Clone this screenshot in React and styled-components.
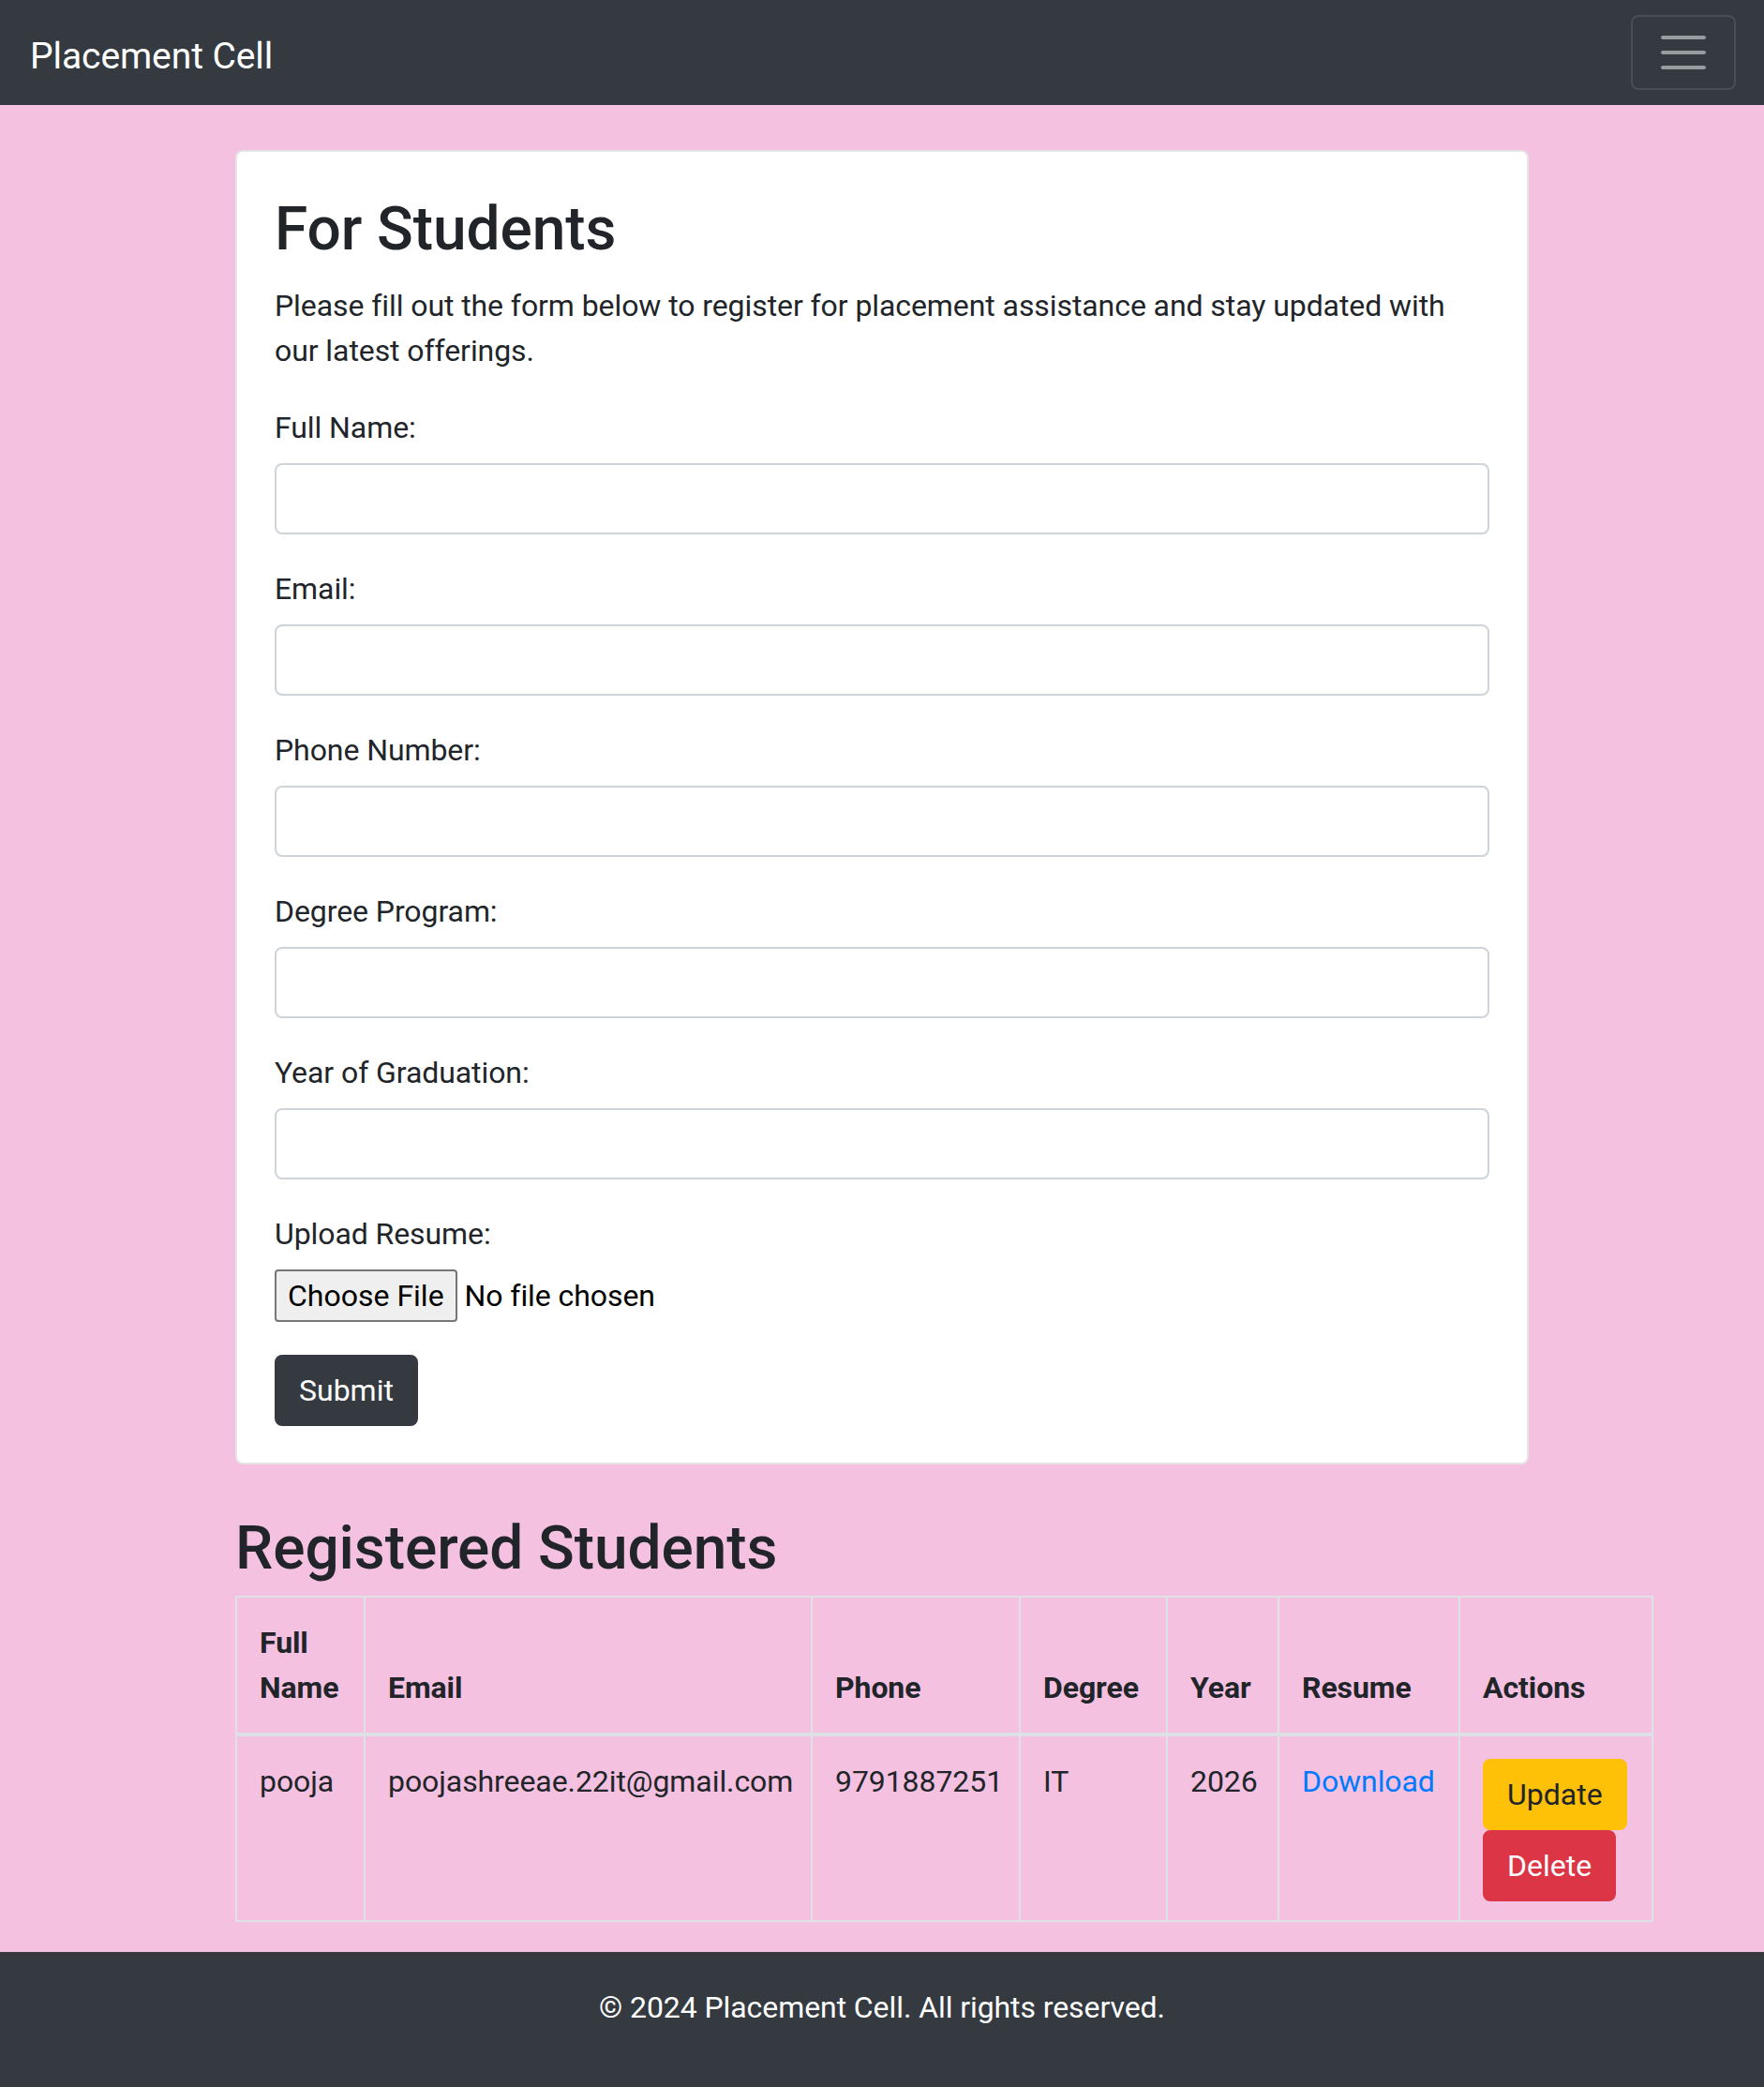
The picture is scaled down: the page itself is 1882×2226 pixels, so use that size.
import React from "react";
import styled, { createGlobalStyle } from "styled-components";

const GlobalStyle = createGlobalStyle`
  *, *::before, *::after { box-sizing: border-box; }
  body {
    margin: 0;
    background: #f5c1e1;
    font-family: Roboto, "Liberation Sans", Arial, sans-serif;
    font-size: 32px;
    line-height: 1.5;
    letter-spacing: -0.08px;
    color: #212529;
  }
`;

const Navbar = styled.nav`
  display: flex;
  align-items: center;
  justify-content: space-between;
  height: 112px;
  padding: 16px 30px 16px 32px;
  background: #343a40;
`;

const Brand = styled.a`
  color: #fff;
  font-size: 39px;
  line-height: 1.5;
  padding: 14px 0 6px;
  text-decoration: none;
  white-space: nowrap;
`;

const Toggler = styled.button`
  display: flex;
  align-items: center;
  justify-content: center;
  width: 112px;
  height: 80px;
  padding: 8px 24px;
  background: transparent;
  border: 2px solid rgba(255, 255, 255, 0.1);
  border-radius: 8px;
  cursor: pointer;
`;

const Main = styled.main`
  width: 1380px;
  margin: 48px auto 0;
`;

const Card = styled.section`
  background: #fff;
  border: 2px solid rgba(0, 0, 0, 0.1);
  border-radius: 8px;
  padding: 45px 40px 39px;
`;

const Heading = styled.h1`
  font-size: 64px;
  font-weight: 500;
  line-height: 1.2;
  margin: ${(p) => p.$top || 0}px 0 ${(p) => p.$bottom || 0}px;
`;

const Intro = styled.p`
  margin: 0 0 32px;
  padding-top: 2px;
`;

const Field = styled.div`
  margin-bottom: ${(p) => p.$gap || 32}px;
`;

const Label = styled.label`
  display: block;
  padding-top: 2px;
  margin-bottom: 14px;
`;

const TextInput = styled.input`
  display: block;
  width: 100%;
  height: 76px;
  padding: 12px 24px;
  font: inherit;
  color: #495057;
  background: #fff;
  border: 2px solid #ced4da;
  border-radius: 8px;
`;

const FileRow = styled.div`
  display: flex;
  align-items: center;
  gap: 8px;
`;

const FileButton = styled.button`
  height: 56px;
  padding: 2px 12px;
  font: inherit;
  line-height: 48px;
  color: #000;
  background: #efefef;
  border: 2px solid #767676;
  border-radius: 4px;
`;

const FileStatus = styled.span`
  color: #000;
`;

const Button = styled.button`
  display: inline-block;
  padding: 12px 24px;
  font: inherit;
  line-height: 48px;
  border-radius: 8px;
  cursor: pointer;
  color: ${(p) => (p.$variant === "warning" ? "#212529" : "#fff")};
  background: ${(p) =>
    p.$variant === "warning" ? "#ffc107" : p.$variant === "danger" ? "#dc3545" : "#343a40"};
  border: 2px solid
    ${(p) =>
      p.$variant === "warning" ? "#ffc107" : p.$variant === "danger" ? "#dc3545" : "#343a40"};
`;

const Table = styled.table`
  width: 1511px;
  table-layout: fixed;
  border-collapse: collapse;
  margin-bottom: 32px;
`;

const Col = styled.col`
  width: ${(p) => p.$w}px;
`;

const Th = styled.th`
  padding: 24px;
  text-align: left;
  vertical-align: bottom;
  font-weight: 700;
  border: 2px solid #dee2e6;
  border-bottom-width: 4px;
`;

const Td = styled.td`
  padding: 24px 24px 20px;
  vertical-align: top;
  border: 2px solid #dee2e6;
  white-space: nowrap;
`;

const Link = styled.a`
  color: #007bff;
  text-decoration: none;
`;

const ActionStack = styled.div`
  display: flex;
  flex-direction: column;
  align-items: flex-start;
`;

const Footer = styled.footer`
  background: #343a40;
  color: #fff;
  text-align: center;
  padding: 35px 0 29px;
`;

const FooterText = styled.p`
  margin: 0 0 32px;
`;

const fields = [
  { id: "name", label: "Full Name:", type: "text" },
  { id: "email", label: "Email:", type: "email" },
  { id: "phone", label: "Phone Number:", type: "tel" },
  { id: "degree", label: "Degree Program:", type: "text" },
  { id: "year", label: "Year of Graduation:", type: "text" },
];

const columns = [
  { title: "Full Name", w: 137 },
  { title: "Email", w: 477 },
  { title: "Phone", w: 222 },
  { title: "Degree", w: 157 },
  { title: "Year", w: 119 },
  { title: "Resume", w: 193 },
  { title: "Actions", w: 206 },
];

export default function App() {
  return (
    <>
      <GlobalStyle />
      <Navbar>
        <Brand href="#">Placement Cell</Brand>
        <Toggler aria-label="Toggle navigation">
          <svg width="60" height="60" viewBox="0 0 30 30">
            <path
              d="M4 7h22M4 15h22M4 23h22"
              stroke="rgba(255,255,255,0.5)"
              strokeWidth="2"
              strokeLinecap="round"
            />
          </svg>
        </Toggler>
      </Navbar>
      <Main>
        <Card>
          <Heading $bottom={16}>For Students</Heading>
          <Intro>
            Please fill out the form below to register for placement assistance and stay updated with
            our latest offerings.
          </Intro>
          <form onSubmit={(e) => e.preventDefault()}>
            {fields.map((f) => (
              <Field key={f.id}>
                <Label htmlFor={f.id}>{f.label}</Label>
                <TextInput id={f.id} type={f.type} />
              </Field>
            ))}
            <Field $gap={35}>
              <Label>Upload Resume:</Label>
              <FileRow>
                <FileButton type="button">Choose File</FileButton>
                <FileStatus>No file chosen</FileStatus>
              </FileRow>
            </Field>
            <Button type="submit">Submit</Button>
          </form>
        </Card>
        <Heading as="h2" $top={52} $bottom={11}>
          Registered Students
        </Heading>
        <Table>
          <colgroup>
            {columns.map((c) => (
              <Col key={c.title} $w={c.w} />
            ))}
          </colgroup>
          <thead>
            <tr>
              {columns.map((c) => (
                <Th key={c.title}>{c.title}</Th>
              ))}
            </tr>
          </thead>
          <tbody>
            <tr>
              <Td>pooja</Td>
              <Td>poojashreeae.22it@gmail.com</Td>
              <Td>9791887251</Td>
              <Td>IT</Td>
              <Td>2026</Td>
              <Td>
                <Link href="#">Download</Link>
              </Td>
              <Td>
                <ActionStack>
                  <Button $variant="warning">Update</Button>
                  <Button $variant="danger">Delete</Button>
                </ActionStack>
              </Td>
            </tr>
          </tbody>
        </Table>
      </Main>
      <Footer>
        <FooterText>© 2024 Placement Cell. All rights reserved.</FooterText>
      </Footer>
    </>
  );
}
